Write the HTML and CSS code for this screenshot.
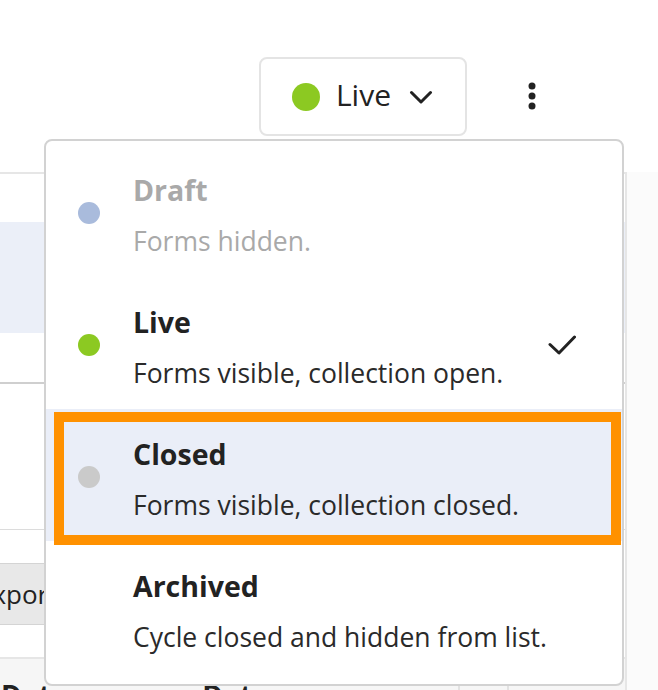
FILE: index.html
```html
<!DOCTYPE html>
<html lang="en">
<head>
<meta charset="utf-8">
<title>Cycle status</title>
<link rel="stylesheet" href="styles.css">
</head>
<body>
<div class="page">
  <header class="topbar">
    <button class="status-btn" type="button">
      <span class="status-dot"></span>
      <span class="status-label">Live</span>
      <svg class="chevron" width="24" height="14" viewBox="0 0 24 14"><path d="M2.5 2.5 L12 12 L21.5 2.5" fill="none" stroke="#222" stroke-width="3" stroke-linecap="round" stroke-linejoin="round"/></svg>
    </button>
    <button class="kebab" type="button" aria-label="More">
      <svg width="8" height="28" viewBox="0 0 8 28"><circle cx="4" cy="4" r="3.5" fill="#222"/><circle cx="4" cy="14" r="3.5" fill="#222"/><circle cx="4" cy="24" r="3.5" fill="#222"/></svg>
    </button>
  </header>

  <div class="main">
    <section class="panel">
      <div class="row row-a"></div>
      <div class="row row-selected"></div>
      <div class="row row-b"></div>
      <div class="row row-c"></div>
      <div class="toolbar">
        <button class="export-btn" type="button">Export</button>
      </div>
      <div class="table-head">
        <span class="th th-1">Date</span>
        <span class="th th-2">Date</span>
        <span class="th-div th-div-1"></span>
        <span class="th-div th-div-2"></span>
      </div>
    </section>
    <aside class="side"></aside>
  </div>

  <ul class="menu" role="listbox">
    <li class="item item-draft">
      <span class="dot dot-draft"></span>
      <div class="item-text">
        <div class="item-title">Draft</div>
        <div class="item-desc">Forms hidden.</div>
      </div>
    </li>
    <li class="item">
      <span class="dot dot-live"></span>
      <div class="item-text">
        <div class="item-title">Live</div>
        <div class="item-desc">Forms visible, collection open.</div>
      </div>
      <svg class="check" width="28" height="20" viewBox="0 0 28 20"><path d="M2 9.5 L11 18 L26.5 2" fill="none" stroke="#222" stroke-width="3" stroke-linecap="round" stroke-linejoin="round"/></svg>
    </li>
    <li class="item item-focus">
      <span class="dot dot-closed"></span>
      <div class="item-text">
        <div class="item-title">Closed</div>
        <div class="item-desc">Forms visible, collection closed.</div>
      </div>
    </li>
    <li class="item">
      <span class="dot dot-none"></span>
      <div class="item-text">
        <div class="item-title">Archived</div>
        <div class="item-desc">Cycle closed and hidden from list.</div>
      </div>
    </li>
  </ul>
</div>
</body>
</html>
```

FILE: styles.css
```css
* { box-sizing: border-box; }

html, body {
  margin: 0;
  padding: 0;
  background: #ffffff;
  overflow: hidden;
}

body {
  font-family: "Open Sans", "Lato", sans-serif;
  color: #222;
}

.page {
  position: relative;
  width: 658px;
  height: 690px;
  overflow: hidden;
}

/* ---------- top bar ---------- */
.topbar {
  height: 172px;
  padding: 57px 122px 0 0;
  display: flex;
  justify-content: flex-end;
  align-items: flex-start;
}

.status-btn {
  height: 79px;
  display: flex;
  align-items: center;
  padding: 0 32px 0 31px;
  background: #fff;
  border: 2px solid #e4e4e4;
  border-radius: 8px;
  font-family: inherit;
  cursor: pointer;
}

.status-dot {
  width: 28px;
  height: 28px;
  border-radius: 50%;
  background: #8cc922;
  margin-right: 16px;
}

.status-label {
  font-size: 30px;
  line-height: 36px;
  color: #222;
  margin: 0 18px 4px 0;
}

.chevron { display: block; }

.kebab {
  margin: 22px 0 0 61px;
  width: 8px;
  height: 34px;
  padding: 0;
  border: 0;
  background: none;
  display: flex;
  align-items: center;
}

/* ---------- background panel ---------- */
.main {
  display: flex;
  height: 560px;
}

.panel {
  width: 627px;
  border-top: 2px solid #e6e6e6;
  border-right: 2px solid #e6e6e6;
  background: #fff;
  display: flex;
  flex-direction: column;
}

.side {
  flex: 1;
  background: #fbfbfb;
}

.row, .toolbar, .table-head { flex: none; }

.row-a { height: 48px; }
.row-selected { height: 111px; background: #ebeff8; }
.row-b { height: 51px; border-bottom: 2px solid #cfcfcf; }
.row-c { height: 146px; border-bottom: 1px solid #dcdcdc; }

.toolbar {
  height: 129px;
  padding-top: 33px;
  border-bottom: 2px solid #e6e6e6;
}

.export-btn {
  height: 62px;
  margin-left: -43px;
  padding: 0 20px;
  background: #e8e8e8;
  border: 1px solid #d4d4d4;
  border-radius: 4px;
  font-family: inherit;
  font-size: 26px;
  color: #222;
}

.table-head {
  position: relative;
  height: 80px;
  background: #f6f6f6;
  padding-top: 19px;
  display: flex;
  align-items: flex-start;
}

.th {
  font-size: 28px;
  line-height: 34px;
  font-weight: 700;
  color: #222;
}

.th-1 { margin-left: 1px; }
.th-2 { margin-left: 135px; }

.th-div {
  position: absolute;
  top: 26px;
  width: 2px;
  height: 20px;
  background: #e2e2e2;
}
.th-div-1 { left: 458px; }
.th-div-2 { left: 507px; }

/* ---------- dropdown menu ---------- */
.menu {
  position: absolute;
  left: 44px;
  top: 139px;
  width: 580px;
  margin: 0;
  padding: 4px 0 11px;
  list-style: none;
  background: #fff;
  border: 2px solid #d2d2d2;
  border-radius: 8px;
}

.item {
  position: relative;
  display: flex;
  align-items: center;
  padding: 23px 46px 19px 32px;
}

.item-focus {
  background: #eaeef8;
}

.item-focus::after {
  content: "";
  position: absolute;
  left: 8px;
  right: 1px;
  top: 3px;
  bottom: -4px;
  border: 10px solid #ff9100;
  pointer-events: none;
}

.dot {
  flex: none;
  width: 22px;
  height: 22px;
  border-radius: 50%;
  margin-right: 33px;
}

.dot-draft { background: #a9bbdc; }
.dot-live { background: #8cc922; }
.dot-closed { background: #cacaca; }
.dot-none { background: transparent; }

.item-text {
  flex: 1;
  min-width: 0;
  padding-top: 4px;
}

.item-title {
  font-size: 28.5px;
  line-height: 36px;
  font-weight: 700;
  color: #222;
}

.item-desc {
  margin-top: 16px;
  font-size: 26.5px;
  line-height: 34px;
  color: #2a2a2a;
}

.item-draft .item-title,
.item-draft .item-desc {
  color: #a9a9a9;
}

.check {
  flex: none;
  display: block;
}
```
